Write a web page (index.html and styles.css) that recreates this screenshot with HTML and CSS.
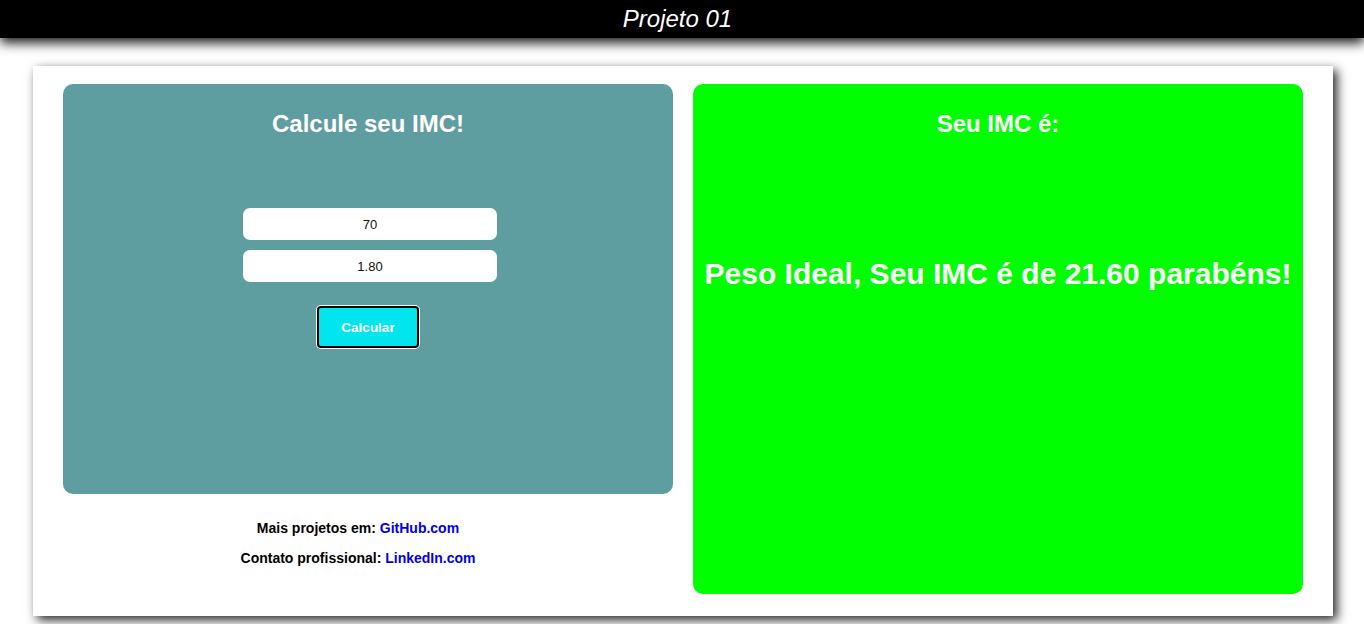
FILE: index.html
```html
<!DOCTYPE html>
<html lang="pt-BR">
<head>
<meta charset="utf-8">
<title>Projeto 01</title>
<link rel="stylesheet" href="styles.css">
</head>
<body>
<header class="topbar"><h1 class="topbar-title">Projeto 01</h1></header>
<main class="card">
  <section class="left-col">
    <div class="panel panel-form">
      <h2 class="panel-title">Calcule seu IMC!</h2>
      <div class="fields">
        <input class="field" type="text" value="70">
        <input class="field" type="text" value="1.80">
      </div>
      <button class="btn" type="button">Calcular</button>
    </div>
    <div class="footer-links">
      <p class="footer-line">Mais projetos em: <a class="link" href="#">GitHub.com</a></p>
      <p class="footer-line">Contato profissional: <a class="link" href="#">LinkedIn.com</a></p>
    </div>
  </section>
  <section class="panel panel-result">
    <h2 class="panel-title">Seu IMC é:</h2>
    <p class="result-text">Peso Ideal, Seu IMC é de 21.60 parabéns!</p>
  </section>
</main>
</body>
</html>
```

FILE: styles.css
```css
* { box-sizing: border-box; }
html, body { margin: 0; padding: 0; background: #fff; }
body {
  font-family: "Liberation Sans", Arial, sans-serif;
  min-height: 100vh;
  padding-bottom: 6px;
}
.topbar {
  position: relative;
  z-index: 2;
  height: 38px;
  background: #000;
  box-shadow: 0 5px 12px rgba(0,0,0,0.9);
}
.topbar-title {
  margin: 0;
  padding-right: 9px;
  text-align: center;
  color: #fff;
  font-style: italic;
  font-weight: normal;
  font-size: 24px;
  line-height: 38px;
}
.card {
  width: 1300px;
  margin: 28px 0 0 33px;
  background: #fff;
  box-shadow: 4px 4px 10px rgba(0,0,0,0.85);
  padding: 18px 30px 22px;
  display: flex;
  gap: 20px;
  align-items: flex-start;
}
.left-col {
  width: 610px;
  display: flex;
  flex-direction: column;
}
.panel {
  width: 610px;
  border-radius: 10px;
  color: #fff;
  display: flex;
  flex-direction: column;
  align-items: center;
}
.panel-form {
  height: 410px;
  background: #5F9EA0;
}
.panel-result {
  height: 510px;
  background: #00FF00;
}
.panel-title {
  margin: 26px 0 0;
  font-size: 24px;
  line-height: 28px;
  font-weight: bold;
}
.fields {
  margin-top: 70px;
  display: flex;
  flex-direction: column;
  gap: 10px;
  padding-left: 4px;
}
.field {
  width: 254px;
  height: 32px;
  border: none;
  border-radius: 7px;
  background: #fff;
  text-align: center;
  font-family: "Liberation Sans", Arial, sans-serif;
  font-size: 13px;
  color: #111;
  outline: none;
}
.btn {
  margin-top: 24px;
  width: 102px;
  height: 42px;
  background: #00E5EE;
  border: 2px solid #000;
  border-radius: 4px;
  box-shadow: 0 0 0 1px #fff;
  color: #fff;
  font-family: "Liberation Sans", Arial, sans-serif;
  font-weight: bold;
  font-size: 13.5px;
  padding: 0;
}
.footer-links {
  padding-top: 26px;
  padding-right: 20px;
  display: flex;
  flex-direction: column;
  gap: 14px;
  align-items: center;
}
.footer-line {
  margin: 0;
  font-size: 14px;
  line-height: 16px;
  font-weight: bold;
  color: #000;
}
.link {
  color: #0000EE;
  text-decoration: none;
}
.result-text {
  margin: 118px 0 0;
  font-size: 30px;
  line-height: 36px;
  font-weight: bold;
  text-align: center;
}
```
